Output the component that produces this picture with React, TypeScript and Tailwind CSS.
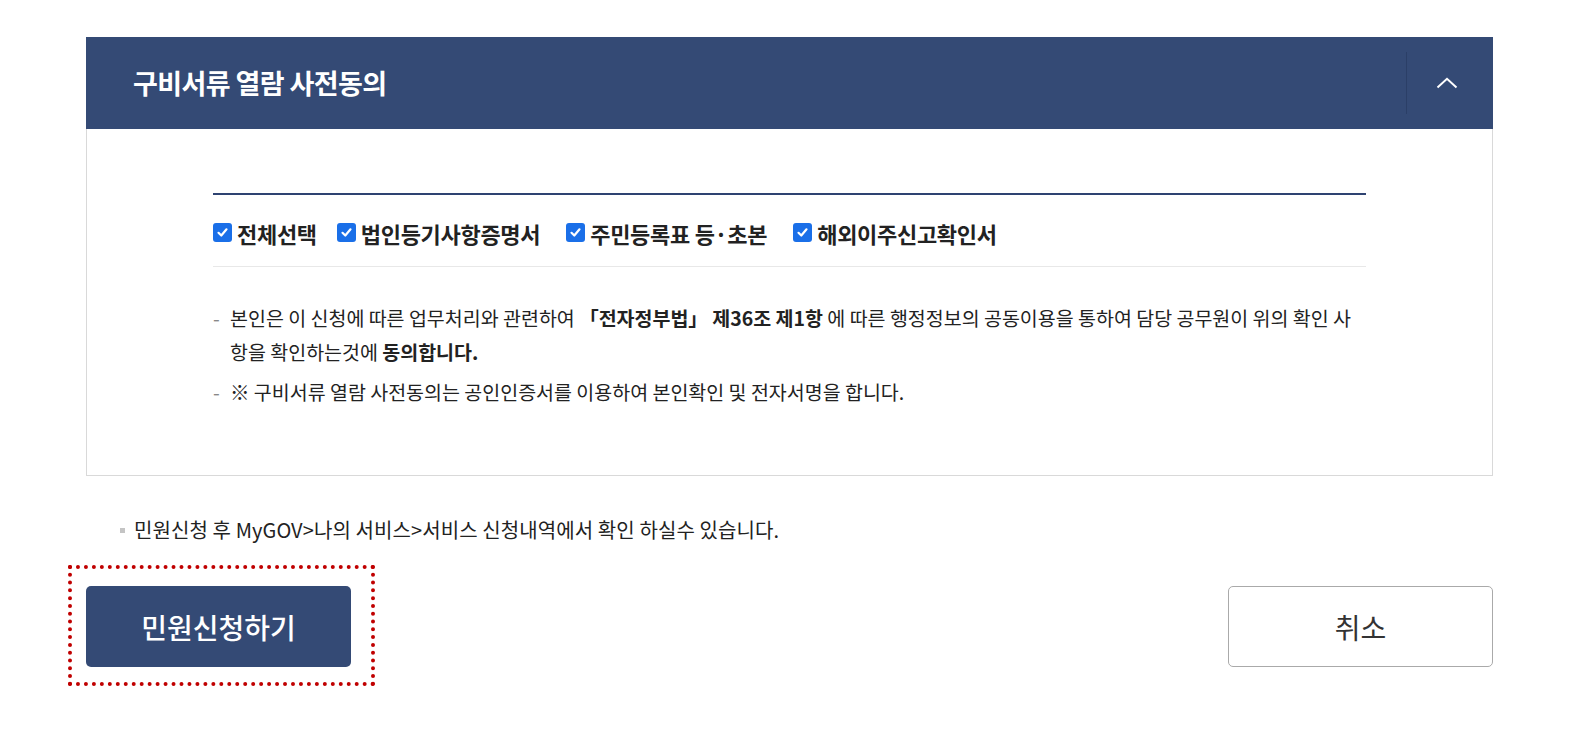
import React from "react";

const items = [
  { label: "전체선택", gap: "mr-[20px]" },
  { label: "법인등기사항증명서", gap: "mr-[26px]" },
  { label: "주민등록표 등·초본", gap: "mr-[26px]" },
  { label: "해외이주신고확인서", gap: "mr-0" },
];

function CheckBox() {
  return (
    <span className="flex h-[19px] w-[19px] shrink-0 items-center justify-center rounded-[3px] bg-[#1a6fe8]">
      <svg width="13" height="13" viewBox="0 0 13 13" fill="none">
        <path d="M2.5 6.8 L5.3 9.5 L10.5 3.3" stroke="#fff" strokeWidth="2.2" strokeLinecap="round" strokeLinejoin="round" />
      </svg>
    </span>
  );
}

export default function App() {
  return (
    <main
      className="min-h-screen bg-white pl-[86px] pt-[37px] text-[#222]"
      style={{ fontFamily: '"Noto Sans CJK KR", "Noto Sans", sans-serif' }}
    >
      <section className="w-[1407px]">
        <div className="flex h-[92px] items-center justify-between bg-[#344a75] pl-[47px]">
          <h2 className="text-[27px] font-bold tracking-[-0.6px] text-white">구비서류 열람 사전동의</h2>
          <div className="flex h-full items-center">
            <span className="h-[62px] w-px bg-[#2b3f67]" />
            <button className="flex h-full w-[86px] items-center justify-center pr-[6px]">
              <svg width="22" height="12" viewBox="0 0 22 12" fill="none">
                <path d="M1.5 10.5 L11 1.8 L20.5 10.5" stroke="#fff" strokeWidth="2" />
              </svg>
            </button>
          </div>
        </div>

        <div className="border-x border-b border-[#d9d9d9] px-[126px] pb-[66px] pt-[64px]">
          <div className="border-t-2 border-[#2e4371]" />
          <div className="flex h-[72px] items-center border-b border-[#e8e8e8] pt-[4px]">
            {items.map((it) => (
              <label key={it.label} className={`${it.gap} flex items-center gap-[5px]`}>
                <CheckBox />
                <span className="text-[22px] font-bold leading-none tracking-[-0.3px]">{it.label}</span>
              </label>
            ))}
          </div>

          <div className="pt-[34px] text-[19.5px] leading-[34px] text-[#222]">
            <p className="flex">
              <span className="w-[17px] shrink-0 text-[#888]">-</span>
              <span>
                본인은 이 신청에 따른 업무처리와 관련하여 <b>「전자정부법」 제36조 제1항</b> 에 따른 행정정보의 공동이용을 통하여 담당 공무원이 위의 확인 사항을 확인하는것에 <b>동의합니다.</b>
              </span>
            </p>
            <p className="mt-[6px] flex">
              <span className="w-[17px] shrink-0 text-[#888]">-</span>
              <span>※ 구비서류 열람 사전동의는 공인인증서를 이용하여 본인확인 및 전자서명을 합니다.</span>
            </p>
          </div>
        </div>

        <p className="mt-[37px] flex items-center pl-[34px] text-[20px] leading-[34px] tracking-[0.1px] text-[#222]">
          <span className="mr-[9px] h-[5px] w-[5px] bg-[#c4c4c4]" />
          민원신청 후 MyGOV&gt;나의 서비스&gt;서비스 신청내역에서 확인 하실수 있습니다.
        </p>

        <div className="mt-[39px] flex justify-between">
          <div className="relative">
            <button className="flex h-[81px] w-[265px] items-center justify-center rounded-[5px] bg-[#344a75] text-[28px] font-medium text-white">
              민원신청하기
            </button>
            <span className="pointer-events-none absolute -bottom-[19px] -left-[18px] -right-[24px] -top-[21px] border-[4px] border-dotted border-[#c00000]" />
          </div>
          <button className="flex h-[81px] w-[265px] items-center justify-center rounded-[5px] border border-[#aaa] bg-white text-[28px] text-[#333]">
            취소
          </button>
        </div>
      </section>
    </main>
  );
}
